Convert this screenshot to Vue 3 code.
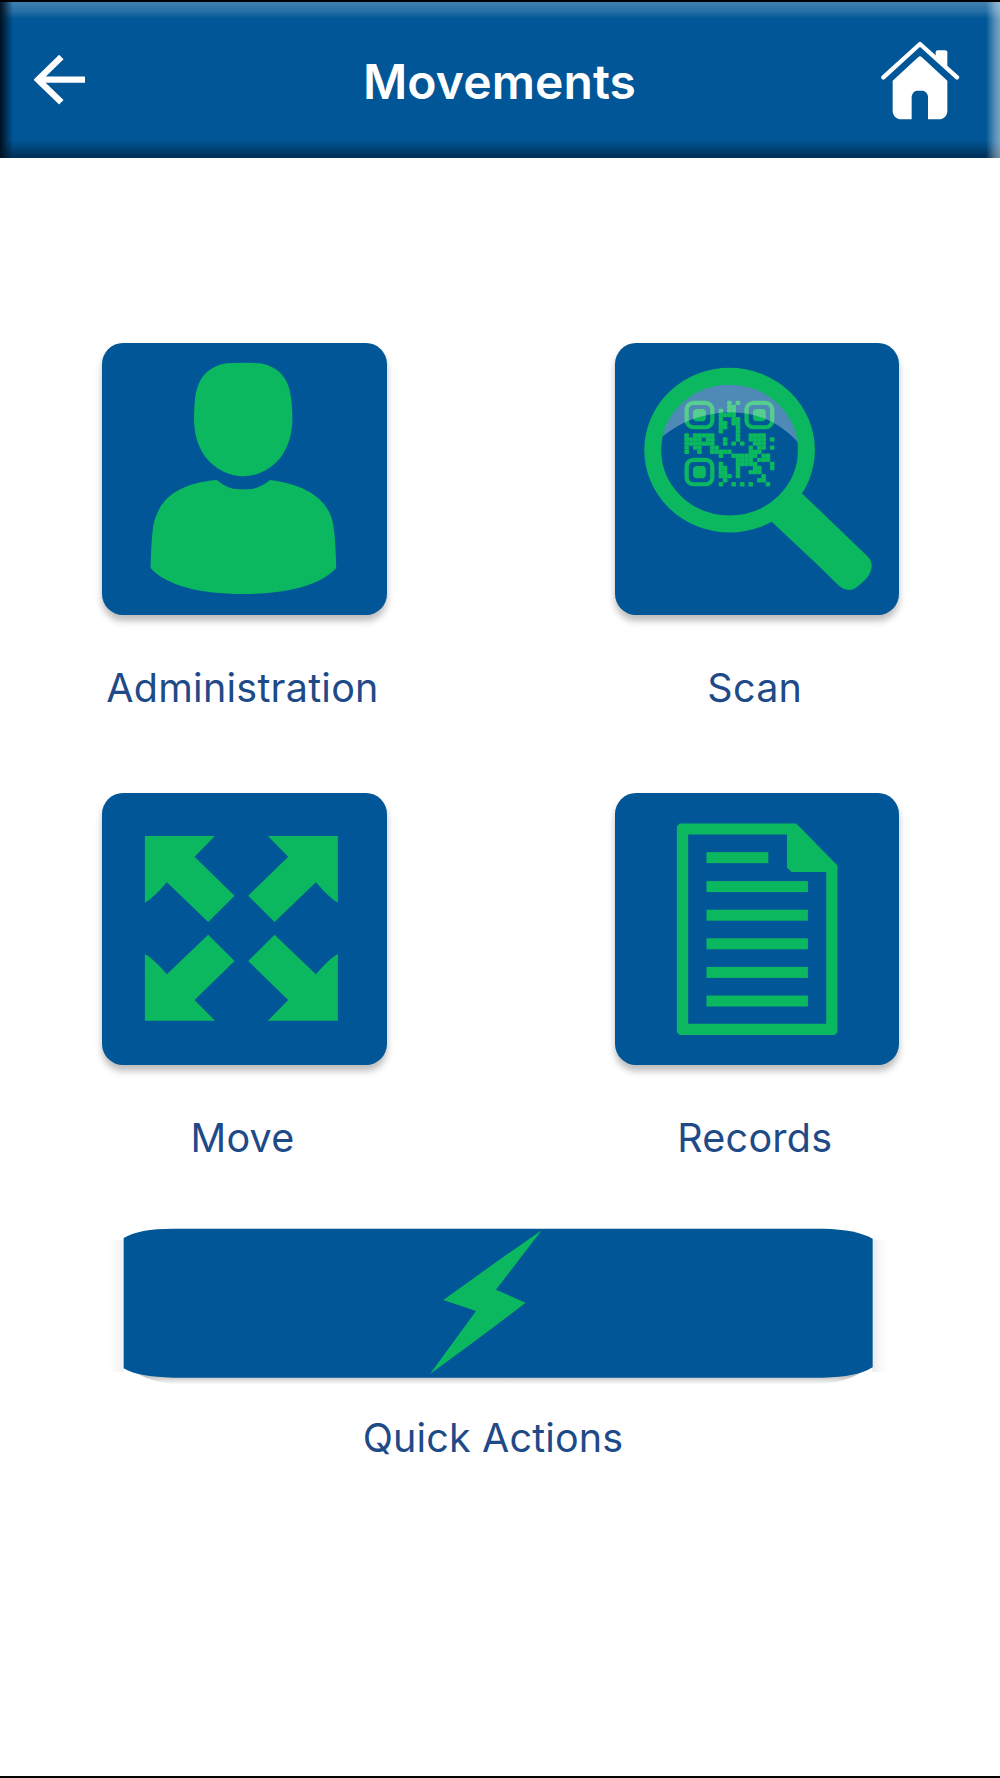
<script setup>
import { computed } from 'vue'

const tiles = [
    { id: 'admin', label: 'Administration' },
    { id: 'scan', label: 'Scan' },
    { id: 'move', label: 'Move' },
    { id: 'records', label: 'Records' },
]

const recordLines = [304, 390, 476, 562, 648]

// 21 x 21 modules, the three finder squares are drawn separately
const qrRows = [
    '..........#.#........',
    '..........##.........',
    '........#.##.........',
    '........####.........',
    '........#..##........',
    '........##.##........',
    '........##..#........',
    '........#...#........',
    '#.#####.....#..####..',
    '####.##..#..#..####.#',
    '#######..#.#.#..###..',
    '#.##..##.......#.##.#',
    '#..#..#####....###...',
    '........#..######.##.',
    '............####.###.',
    '........#...#####...#',
    '........##..#...##..#',
    '........##..#..###...',
    '........###.#.....#..',
    '.........#.......##..',
    '........#..#.#.#...#.',
]

const qrModules = computed(() => {
    let lista = []
    for (let y = 0; y < qrRows.length; y++)
        for (let x = 0; x < qrRows[y].length; x++)
            if (qrRows[y][x] === '#') lista.push({ x, y })
    return lista
})

const finders = [[0, 0], [14, 0], [0, 14]]
</script>

<template>
    <main class="screen">
        <header class="topbar">
            <svg class="back" viewBox="102 162 156 156">
                <path d="M255 239H122M184 171L114 239L184 307" />
            </svg>
            <h1>Movements</h1>
            <svg class="home" viewBox="124 124 237 237">
                <path class="roof" d="M131 233L241 133L352 233" />
                <path d="M288 170V158Q288 152 294 152H317Q323 152 323 158V204Z" />
                <path d="M159 243L236 172Q241 168 246 172L323 243V337Q320 354 303 359H265V290Q262 276 250 273H232Q219 275 216 290V359H179Q163 355 159 337Z" />
            </svg>
        </header>

        <section class="menu">
            <div v-for="t in tiles" :key="t.id" class="item">
                <button class="tile">
                    <svg v-if="t.id === 'admin'" viewBox="37 40 852 816">
                        <path d="M410 101Q460 97 510 101C575 112 600 155 605 215C612 290 605 335 575 380C545 420 500 440 460 440C420 440 375 420 345 380C315 335 308 290 315 215C320 155 345 112 410 101Z" />
                        <path d="M380 451Q415 479 445 479H475Q505 479 541 451C650 465 720 510 731 590Q737 630 739 715C690 768 590 793 460 793C330 793 230 768 182 715Q184 630 190 590C205 510 260 462 380 451Z" />
                    </svg>
                    <svg v-else-if="t.id === 'scan'" viewBox="43 40 855 816">
                        <g transform="translate(252 213) scale(12.86 12.24)">
                            <g v-for="(f, i) in finders" :key="i" :transform="`translate(${f[0]} ${f[1]})`">
                                <rect class="ring" x=".5" y=".5" width="6" height="6" rx="1.6" />
                                <rect x="2" y="2" width="3" height="3" rx=".9" />
                            </g>
                            <rect v-for="m in qrModules" :key="m.x + '-' + m.y" :x="m.x - .04" :y="m.y - .04"
                                width="1.08" height="1.08" rx=".25" />
                        </g>
                        <path class="gloss" d="M186 320A205 198 0 0 1 594 338Q510 247 390 247Q270 250 186 320Z" />
                        <ellipse class="lens" cx="387.5" cy="361" rx="231" ry="222" />
                        <path d="M515 577L520 545L575 490L607 493L802 680Q826 705 806 737Q795 754 768 774Q745 791 717 770L658 712Z" />
                    </svg>
                    <svg v-else-if="t.id === 'move'" viewBox="37 40 852 816">
                        <path d="M165 169H375L314 231L434 348L355 427L231 308Q190 356 165 369Z" />
                        <path d="M744 169H534L595 231L475 348L554 427L678 308Q719 356 744 369Z" />
                        <path d="M165 723H375L314 661L434 544L355 465L231 584Q190 536 165 523Z" />
                        <path d="M744 723H534L595 661L475 544L554 465L678 584Q719 536 744 523Z" />
                    </svg>
                    <svg v-else viewBox="43 40 855 816">
                        <path fill-rule="evenodd" d="M237 131H588L712 257V758L704 767H237L229 758V139ZM263 164V733H678V277H574L560 264V164Z" />
                        <rect x="318" y="217" width="186" height="33" />
                        <rect v-for="y in recordLines" :key="y" x="318" :y="y" width="305" height="33" />
                    </svg>
                </button>
                <span class="label">{{ t.label }}</span>
            </div>
        </section>

        <section class="quick">
            <svg class="quick-bar" viewBox="0 0 2400 540">
                <defs>
                    <linearGradient id="side-l">
                        <stop offset="0" stop-color="#fff" />
                        <stop offset="1" stop-color="#f1f1f1" />
                    </linearGradient>
                    <linearGradient id="side-r">
                        <stop offset="0" stop-color="#ebe9e9" />
                        <stop offset=".4" stop-color="#f7f7f7" />
                        <stop offset="1" stop-color="#fff" />
                    </linearGradient>
                    <linearGradient id="under" gradientUnits="userSpaceOnUse" x1="0" y1="500" x2="0" y2="524">
                        <stop offset="0" stop-color="#c4c4c4" />
                        <stop offset="1" stop-color="#fff" />
                    </linearGradient>
                </defs>
                <rect x="28" y="90" width="44" height="396" fill="url(#side-l)" />
                <rect x="2317" y="90" width="48" height="396" fill="url(#side-r)" />
                <path d="M110 490Q170 524 260 524H2130Q2220 524 2280 490Z" fill="url(#under)" />
                <path class="body" d="M71 84Q115 56 220 56H2170Q2270 58 2318 86V472Q2270 502 2170 503H220Q115 502 71 475Z" />
                <path d="M1325 61L1197 150L1030 270L1128 303L990 492L1113 402L1200 337L1277 278L1188 239Z" />
            </svg>
            <span class="label">Quick Actions</span>
        </section>
    </main>
</template>

<style>
body {
    margin: 0;
    background: #fff;
}
</style>

<style scoped>
.screen {
    box-sizing: border-box;
    width: 1000px;
    height: 1778px;
    border-top: 2px solid #000;
    border-bottom: 2px solid #000;
    background: #fff;
    font-family: Inter, "Liberation Sans", sans-serif;
    overflow: hidden;
}

.topbar {
    box-sizing: border-box;
    height: 155.5px;
    padding: 0 40px 0 34px;
    display: grid;
    grid-template-columns: 80px 1fr 80px;
    align-items: start;
    background:
        linear-gradient(to right, #000c18f0, #00152ac0 4px, #00305700 13px),
        linear-gradient(to left, #ffffff78, #ffffff58 5px, #ffffff00 14px),
        linear-gradient(to bottom, #ffffff40, #ffffff28 9px, #ffffff00 17px),
        linear-gradient(to top, #001d38b0, #00203c70 7px, #00305700 18px),
        #005696;
}

.topbar svg {
    fill: #fff;
}

.topbar h1 {
    margin: 51px 0 0;
    padding-left: 5px;
    text-align: center;
    font-size: 48px;
    line-height: 58px;
    font-weight: 600;
    letter-spacing: 0.1px;
    color: #fff;
}

.back {
    width: 52px;
    height: 52px;
    margin-top: 52px;
}

.topbar .back path {
    fill: none;
    stroke: #fff;
    stroke-width: 19;
}

.home {
    justify-self: end;
    width: 79px;
    height: 79px;
    margin-top: 39px;
}

.topbar .roof {
    fill: none;
    stroke: #fff;
    stroke-width: 13;
    stroke-linecap: round;
    stroke-linejoin: round;
}

.menu {
    display: grid;
    grid-template-columns: 284.4px 284.4px;
    column-gap: 227.9px;
    grid-auto-rows: 450px;
    padding: 185.9px 0 0 102.3px;
}

.item {
    display: flex;
    flex-direction: column;
    align-items: center;
}

.tile {
    width: 284.4px;
    height: 272px;
    padding: 0;
    border: none;
    border-radius: 21px;
    background: #005696;
    box-shadow: 0 6px 7px rgba(0, 0, 0, 0.26);
}

.tile svg {
    display: block;
    width: 100%;
    height: 100%;
    fill: #0bb85f;
}

.ring {
    fill: none;
    stroke: #0bb85f;
    stroke-width: 1;
}

.gloss {
    fill: #fff;
    fill-opacity: 0.31;
}

.lens {
    fill: none;
    stroke: #0bb85f;
    stroke-width: 51;
}

.label {
    margin: 48.3px 4px 0 0;
    font-size: 39.5px;
    line-height: 48px;
    letter-spacing: 0.25px;
    white-space: nowrap;
    color: #1f4a88;
}

.quick {
    display: flex;
    flex-direction: column;
    align-items: center;
    margin-top: -33.4px;
}

.quick-bar {
    width: 800px;
    height: 180px;
    fill: #0bb85f;
}

.body {
    fill: #005696;
}

.quick .label {
    margin: 23.5px 14px 0 0;
    letter-spacing: 0.15px;
}
</style>
